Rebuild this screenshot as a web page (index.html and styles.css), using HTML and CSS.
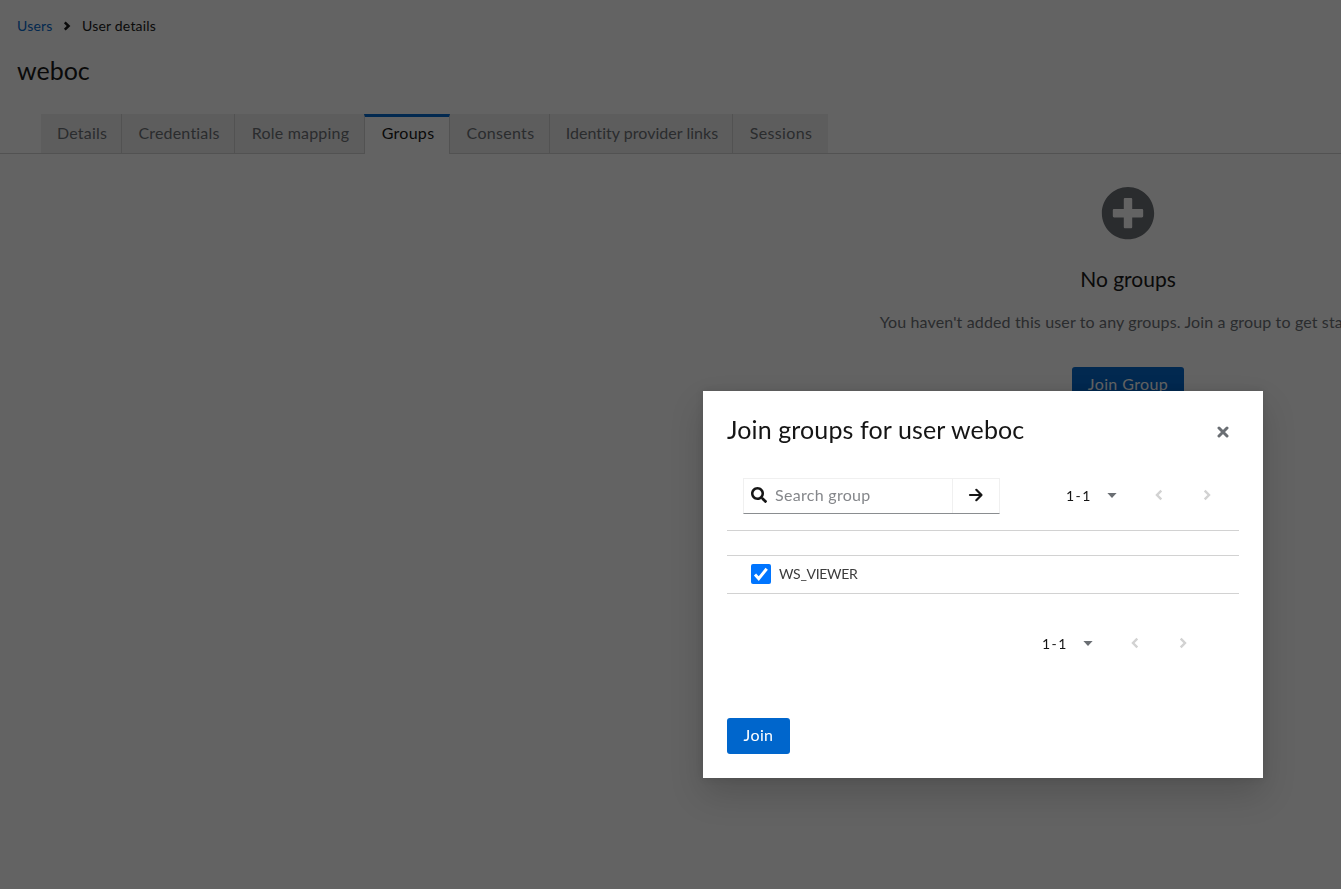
FILE: index.html
```html
<!DOCTYPE html>
<html lang="en">
<head>
<meta charset="utf-8">
<title>User details</title>
<link rel="stylesheet" href="styles.css">
</head>
<body>
<main class="page">
  <nav class="breadcrumb">
    <a class="crumb-link" href="#"><span>Users</span></a>
    <svg class="crumb-sep" viewBox="0 0 8 10"><path d="M1.800 1.300 5.600 5 1.800 8.700"/></svg>
    <span class="crumb-current">User details</span>
  </nav>
  <h1 class="page-title"><span>weboc</span></h1>
  <div class="tabs">
    <button class="tab tab-details"><span>Details</span></button>
    <button class="tab tab-credentials"><span>Credentials</span></button>
    <button class="tab tab-roles"><span>Role mapping</span></button>
    <button class="tab tab-groups active"><span>Groups</span></button>
    <button class="tab tab-consents"><span>Consents</span></button>
    <button class="tab tab-idp"><span>Identity provider links</span></button>
    <button class="tab tab-sessions"><span>Sessions</span></button>
  </div>
  <section class="empty">
    <svg class="empty-icon" viewBox="0 0 512 512"><path fill="#6a6e73" d="M256 0C119 0 8 111 8 248s111 248 248 248 248-111 248-248S393 0 256 0zm144 276c0 6.600-5.400 12-12 12h-92v92c0 6.600-5.400 12-12 12h-56c-6.600 0-12-5.400-12-12v-92h-92c-6.600 0-12-5.400-12-12v-56c0-6.600 5.400-12 12-12h92v-92c0-6.600 5.400-12 12-12h56c6.600 0 12 5.400 12 12v92h92c6.600 0 12 5.400 12 12v56z"/></svg>
    <h2 class="empty-title"><span>No groups</span></h2>
    <p class="empty-text"><span>You haven't added this user to any groups. Join a group to get started.</span></p>
    <button class="primary join-group"><span>Join Group</span></button>
  </section>
</main>
<div class="backdrop">
  <div class="modal" role="dialog">
    <header class="modal-head">
      <h2 class="modal-title">Join groups for user weboc</h2>
      <svg class="close" viewBox="0 0 12 12"><path d="m2 2 8 8M10 2l-8 8"/></svg>
    </header>
    <div class="toolbar">
      <div class="search">
        <div class="search-field">
          <svg class="search-icon" viewBox="0 0 512 512"><path d="M505 442.700 405.300 343c-4.500-4.500-10.600-7-17-7H372c27.600-35.300 44-79.700 44-128C416 93.100 322.900 0 208 0S0 93.100 0 208s93.100 208 208 208c48.300 0 92.700-16.400 128-44v16.300c0 6.400 2.500 12.500 7 17l99.700 99.700c9.400 9.400 24.600 9.400 33.900 0l28.300-28.300c9.400-9.400 9.400-24.600.1-34zM208 336c-70.700 0-128-57.200-128-128 0-70.700 57.200-128 128-128 70.700 0 128 57.200 128 128 0 70.700-57.200 128-128 128z"/></svg>
          <span class="placeholder">Search group</span>
        </div>
        <div class="search-go"><svg viewBox="0 0 16 16"><path d="M2 8h11M8.300 2.800 13.500 8l-5.200 5.200"/></svg></div>
      </div>
      <div class="pager">
        <span class="range">1 - 1</span>
        <svg class="caret" viewBox="0 0 10 5"><path d="M.4 0h9.200L5 5z"/></svg>
        <svg class="arrow" viewBox="0 0 8 12"><path d="M6.300 1.700 2 6l4.300 4.300"/></svg>
        <svg class="arrow" viewBox="0 0 8 12"><path d="M1.700 1.700 6 6l-4.300 4.300"/></svg>
      </div>
    </div>
    <div class="row">
      <span class="check"><svg viewBox="0 0 20 20"><path d="m4 10.600 3.700 4L15.700 4.700"/></svg></span>
      <span class="row-name">WS_VIEWER</span>
    </div>
    <div class="pager pager-bottom">
      <span class="range">1 - 1</span>
      <svg class="caret" viewBox="0 0 10 5"><path d="M.4 0h9.200L5 5z"/></svg>
      <svg class="arrow" viewBox="0 0 8 12"><path d="M6.300 1.700 2 6l4.300 4.300"/></svg>
      <svg class="arrow" viewBox="0 0 8 12"><path d="M1.700 1.700 6 6l-4.300 4.300"/></svg>
    </div>
    <button class="primary join"><span>Join</span></button>
  </div>
</div>
</body>
</html>
```
FILE: styles.css
```css
* { box-sizing: border-box; }
html { overflow: hidden; }
body { margin: 0; height: 889px; overflow: hidden; background: #fff; color: #151515; font: 16px/24px Lato, "Liberation Sans", sans-serif; }
h1, h2, p { margin: 0; font-weight: 400; }
button { font: inherit; border: 0; padding: 0 0 2px; white-space: nowrap; }
svg { display: block; flex: none; }

.page { width: 2256px; }
.breadcrumb { display: flex; align-items: center; height: 20px; margin: 16px 0 0 17px; font-size: 14px; line-height: 20px; }
.crumb-link { width: 46px; color: #06c; text-decoration: none; letter-spacing: .2px; }
.crumb-sep { width: 8px; height: 10px; margin-right: 11px; fill: none; stroke: #151515; stroke-width: 2.5; }
.crumb-current { letter-spacing: .2px; }
.page-title { margin: 18px 0 0 17px; height: 32px; font-size: 25px; line-height: 32px; }

.tabs { display: flex; margin-top: 28px; height: 40px; padding-left: 41px; border-bottom: 1px solid #d2d2d2; }
.tab { height: 39px; background: #f0f0f0; color: #6a6e73; border-right: 1px solid #d2d2d2; letter-spacing: .2px; padding-left: 2px; }
.tab-details { width: 81px; }
.tab-credentials { width: 113px; }
.tab-roles { width: 130px; }
.tab-consents { width: 100px; letter-spacing: .3px; }
.tab-idp { width: 183px; letter-spacing: .03px; }
.tab-sessions { width: 95px; border-right: 0; letter-spacing: .35px; padding-left: 1px; }
.tab.active { height: 40px; margin-left: -1px; width: 86px; background: #fff; color: #151515; border-top: 3px solid #06c; border-left: 1px solid #d2d2d2; padding: 0 0 6px 2px; letter-spacing: .3px; }

.empty { display: flex; flex-direction: column; align-items: center; padding-top: 33px; }
.empty-icon { width: 54px; height: 54px; }
.empty-title { margin-top: 23px; font-size: 21px; line-height: 30px; }
.empty-text { margin-top: 16px; color: #6a6e73; letter-spacing: .14px; }
.primary { height: 36px; border-radius: 3px; background: #06c; color: #fff; letter-spacing: .4px; }
.join-group { width: 112px; margin-top: 33px; }

.backdrop { position: fixed; inset: 0; background: rgba(3, 3, 3, .62); }
.modal { position: absolute; left: 703px; top: 391px; width: 560px; height: 387px; padding: 22px 24px 24px; background: #fff; box-shadow: 0 16px 32px rgba(3, 3, 3, .16), 0 0 8px rgba(3, 3, 3, .1); }
.modal-head { display: flex; justify-content: space-between; align-items: center; height: 32px; padding-right: 10px; }
.modal-title { font-size: 25px; line-height: 32px; letter-spacing: .12px; white-space: nowrap; }
.close { width: 12px; height: 12px; margin-top: 5px; fill: none; stroke: #6a6e73; stroke-width: 3; stroke-linecap: round; }
.toolbar { display: flex; justify-content: space-between; height: 86px; padding: 33px 28px 0 16px; border-bottom: 1px solid #d2d2d2; }
.search { display: flex; width: 257px; height: 36px; border: 1px solid #f0f0f0; border-bottom-color: #8a8d90; }
.search-field { display: flex; align-items: center; width: 209px; padding: 0 0 2px 7px; }
.search-icon { width: 16px; height: 16px; margin-right: 8px; fill: #151515; }
.placeholder { color: #85878b; letter-spacing: .3px; }
.search-go { display: grid; place-items: center; width: 47px; padding-bottom: 2px; border-left: 1px solid #f0f0f0; }
.search-go svg { width: 16px; height: 16px; fill: none; stroke: #151515; stroke-width: 2.2; stroke-linecap: round; stroke-linejoin: round; }
.pager { display: flex; align-items: center; height: 34px; font-size: 14px; }
.range { width: 41px; padding-top: 1px; word-spacing: -1.500px; letter-spacing: -.3px; }
.caret { width: 10px; height: 5px; margin-right: 38px; fill: #6a6e73; }
.arrow { width: 8px; height: 12px; fill: none; stroke: #d2d2d2; stroke-width: 2.4; }
.arrow + .arrow { margin-left: 40px; }
.row { display: flex; align-items: center; height: 39px; margin-top: 24px; padding: 0 0 2px 24px; border: solid #d2d2d2; border-width: 1px 0; font-size: 14px; }
.row-name { color: #3c3c3c; letter-spacing: -.3px; }
.check { width: 20px; height: 20px; margin-right: 8px; border-radius: 2px; background: #0075ff; }
.check svg { width: 20px; height: 20px; fill: none; stroke: #fff; stroke-width: 3; }
.pager-bottom { justify-content: flex-end; margin-top: 32px; padding-right: 52px; }
.join { width: 63px; margin-top: 58px; display: block; }
```
